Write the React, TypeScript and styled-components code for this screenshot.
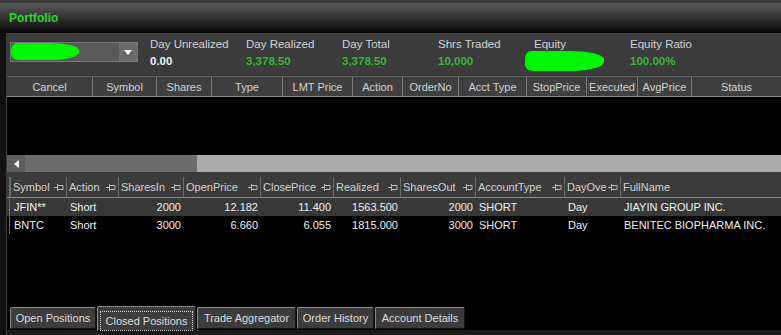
import React from 'react';
import styled, { createGlobalStyle } from 'styled-components';

const Global = createGlobalStyle`
  html, body { margin: 0; padding: 0; background: #000; }
  body { font-family: "Liberation Sans", Arial, sans-serif; overflow: hidden; }
  * { box-sizing: border-box; }
`;

const Window = styled.div`
  width: 781px;
  height: 335px;
  display: flex;
  flex-direction: column;
  background: #000;
  overflow: hidden;
`;

const TopStrip = styled.div`
  height: 3px;
  flex: none;
  background: #3b3b3b;
`;

const TitleBar = styled.div`
  height: 30px;
  flex: none;
  display: flex;
  align-items: center;
  padding-left: 9px;
  background: linear-gradient(#5a5a5a, #2c2c2c 55%, #050505);
  color: #22dd22;
  font-weight: bold;
  font-size: 12px;
`;

const Body = styled.div`
  flex: 1;
  display: flex;
  min-height: 0;
`;

const Rail = styled.div`
  width: 7px;
  flex: none;
  background: #121212;
  border-right: 1px solid #3a3a3a;
`;

const Main = styled.div`
  flex: 1;
  display: flex;
  flex-direction: column;
  min-width: 0;
`;

/* ---------- Info panel ---------- */
const InfoPanel = styled.div`
  height: 43px;
  flex: none;
  background: #3b3b3b;
  display: flex;
  align-items: flex-start;
  padding: 4px 0 0 3px;
`;

const Dropdown = styled.div`
  width: 128px;
  height: 20px;
  margin-top: 5px;
  border: 1px solid #767676;
  background: #585858;
  display: flex;
  align-items: stretch;
`;

const Blob = styled.span<{ $w: number; $h: number }>`
  display: block;
  width: ${p => p.$w}px;
  height: ${p => p.$h}px;
  background: #00f500;
  border-radius: 6px 45% 40% 8px / 8px 40% 45% 6px;
`;

const DropSpacer = styled.div`
  flex: 1;
`;

const DropButton = styled.div`
  width: 18px;
  background: #6a6a6a;
  display: flex;
  align-items: center;
  justify-content: center;
`;

const Stats = styled.div`
  display: flex;
  margin-left: 12px;
`;

const Stat = styled.div`
  width: 96px;
  display: flex;
  flex-direction: column;
  font-size: 11.5px;
  line-height: 15px;
`;

const StatLabel = styled.div`
  color: #d2d2d2;
`;

const StatValue = styled.div<{ $green?: boolean }>`
  color: ${p => (p.$green ? '#35b935' : '#f2f2f2')};
  font-weight: bold;
  margin-top: 2px;
`;

const BlobValue = styled.div`
  margin: -1px 0 0 -9px;
`;

/* ---------- Orders grid ---------- */
const OrdersHeader = styled.div`
  height: 21px;
  flex: none;
  display: flex;
  background: #3f3f3f;
  border-top: 1px solid #5c5c5c;
  border-bottom: 1px solid #8c8c8c;
`;

const HeadCell = styled.div<{ $w?: number }>`
  ${p => (p.$w ? `width: ${p.$w}px; flex: none;` : 'flex: 1;')}
  border-right: 1px solid #7a7a7a;
  color: #d2d2d2;
  font-size: 11px;
  display: flex;
  align-items: center;
  justify-content: center;
  white-space: nowrap;
  overflow: hidden;
  &:last-child { border-right: none; }
`;

const OrdersBody = styled.div`
  height: 58px;
  flex: none;
  background: #000;
`;

const ScrollBar = styled.div`
  height: 17px;
  flex: none;
  display: flex;
  background: #ababab;
`;

const ScrollArrow = styled.div`
  width: 18px;
  background: #5e5e5e;
  display: flex;
  align-items: center;
  justify-content: center;
`;

const ScrollThumb = styled.div`
  width: 172px;
  background: #6b6b6b;
`;

/* ---------- Closed positions grid ---------- */
const ClosedGrid = styled.div`
  flex: 1;
  display: flex;
  flex-direction: column;
  background: #000;
`;

const ClosedHeader = styled.div`
  height: 26px;
  flex: none;
  display: flex;
  padding-top: 5px;
  background: #3b3b3b;
  border-bottom: 1px solid #8c8c8c;
`;

const Row = styled.div<{ $alt?: boolean }>`
  height: 18px;
  flex: none;
  display: flex;
  background: ${p => (p.$alt ? '#000' : '#383838')};
`;

const Selector = styled.div`
  width: 3px;
  flex: none;
  border-right: 1px solid #6a6a6a;
`;

const ColHead = styled.div<{ $w: number }>`
  width: ${p => p.$w}px;
  flex: none;
  border-left: 1px solid #6c6c6c;
  padding: 0 2px;
  display: flex;
  align-items: center;
  justify-content: space-between;
  color: #d2d2d2;
  font-size: 11px;
  white-space: nowrap;
  overflow: hidden;
  &:first-of-type { border-left: none; }
`;

const Cell = styled.div<{ $w: number; $right?: boolean }>`
  width: ${p => p.$w}px;
  flex: none;
  display: flex;
  align-items: center;
  justify-content: ${p => (p.$right ? 'flex-end' : 'flex-start')};
  padding: ${p => (p.$right ? '0 2px 0 0' : '0 0 0 4px')};
  color: #f0f0f0;
  font-size: 11px;
  white-space: nowrap;
  overflow: hidden;
`;

const Filler = styled.div`
  flex: 1;
`;

/* ---------- Tabs ---------- */
const TabStrip = styled.div`
  height: 30px;
  flex: none;
  display: flex;
  align-items: flex-start;
  gap: 1px;
  padding: 2px 0 0 3px;
  background: #000;
  border-bottom: 5px solid #1a1a1a;
`;

const Tab = styled.div<{ $w: number; $active?: boolean }>`
  width: ${p => p.$w}px;
  height: ${p => (p.$active ? 25 : 22)}px;
  margin-top: ${p => (p.$active ? -1 : 0)}px;
  background: #3c3c3c;
  border-top: 1px solid #8a8a8a;
  border-left: 1px solid #8a8a8a;
  border-right: 1px solid #161616;
  border-bottom: 1px solid #161616;
  border-radius: 2px 2px 0 0;
  color: #dcdcdc;
  font-size: 11px;
  display: flex;
  align-items: center;
  justify-content: center;
  padding-top: ${p => (p.$active ? 4 : 0)}px;
  white-space: nowrap;
`;

const Focus = styled.span`
  outline: 1px dotted #d8d8d8;
  outline-offset: 3px;
  padding: 0 2px;
`;

const Pin = () => (
  <svg width="10" height="9" viewBox="0 0 10 9">
    <path d="M0 4.5H3M3.5 1V8M3.5 2.5H9V6.5H3.5" stroke="#bdbdbd" strokeWidth="1" fill="none" />
  </svg>
);

const orderCols: [string, number | undefined][] = [
  ['Cancel', 86],
  ['Symbol', 64],
  ['Shares', 55],
  ['Type', 71],
  ['LMT Price', 70],
  ['Action', 50],
  ['OrderNo', 56],
  ['Acct Type', 68],
  ['StopPrice', 60],
  ['Executed', 51],
  ['AvgPrice', 54],
  ['Status', undefined],
];

const closedCols: { name: string; w: number; right?: boolean }[] = [
  { name: 'Symbol', w: 56 },
  { name: 'Action', w: 52 },
  { name: 'SharesIn', w: 65, right: true },
  { name: 'OpenPrice', w: 77, right: true },
  { name: 'ClosePrice', w: 73, right: true },
  { name: 'Realized', w: 67, right: true },
  { name: 'SharesOut', w: 75, right: true },
  { name: 'AccountType', w: 89 },
  { name: 'DayOve', w: 56 },
  { name: 'FullName', w: 161 },
];

const rows = [
  ['JFIN**', 'Short', '2000', '12.182', '11.400', '1563.500', '2000', 'SHORT', 'Day', 'JIAYIN GROUP INC.'],
  ['BNTC', 'Short', '3000', '6.660', '6.055', '1815.000', '3000', 'SHORT', 'Day', 'BENITEC BIOPHARMA INC.'],
];

const tabs: [string, number][] = [
  ['Open Positions', 86],
  ['Closed Positions', 99],
  ['Trade Aggregator', 99],
  ['Order History', 77],
  ['Account Details', 90],
];

export default function App() {
  return (
    <Window>
      <Global />
      <TopStrip />
      <TitleBar>Portfolio</TitleBar>
      <Body>
        <Rail />
        <Main>
          <InfoPanel>
            <Dropdown>
              <Blob $w={68} $h={17} />
              <DropSpacer />
              <DropButton>
                <svg width="8" height="5" viewBox="0 0 8 5">
                  <path d="M0 0H8L4 5Z" fill="#ffffff" />
                </svg>
              </DropButton>
            </Dropdown>
            <Stats>
              <Stat>
                <StatLabel>Day Unrealized</StatLabel>
                <StatValue>0.00</StatValue>
              </Stat>
              <Stat>
                <StatLabel>Day Realized</StatLabel>
                <StatValue $green>3,378.50</StatValue>
              </Stat>
              <Stat>
                <StatLabel>Day Total</StatLabel>
                <StatValue $green>3,378.50</StatValue>
              </Stat>
              <Stat>
                <StatLabel>Shrs Traded</StatLabel>
                <StatValue $green>10,000</StatValue>
              </Stat>
              <Stat>
                <StatLabel>Equity</StatLabel>
                <BlobValue>
                  <Blob $w={79} $h={20} />
                </BlobValue>
              </Stat>
              <Stat>
                <StatLabel>Equity Ratio</StatLabel>
                <StatValue $green>100.00%</StatValue>
              </Stat>
            </Stats>
          </InfoPanel>

          <OrdersHeader>
            {orderCols.map(([n, w]) => (
              <HeadCell key={n} $w={w}>{n}</HeadCell>
            ))}
          </OrdersHeader>
          <OrdersBody />
          <ScrollBar>
            <ScrollArrow>
              <svg width="5" height="8" viewBox="0 0 5 8">
                <path d="M5 0V8L0 4Z" fill="#ffffff" />
              </svg>
            </ScrollArrow>
            <ScrollThumb />
          </ScrollBar>

          <ClosedGrid>
            <ClosedHeader>
              <Selector />
              {closedCols.map(c => (
                <ColHead key={c.name} $w={c.w}>
                  <span>{c.name}</span>
                  {c.name !== 'FullName' && <Pin />}
                </ColHead>
              ))}
            </ClosedHeader>
            {rows.map((r, i) => (
              <Row key={r[0]} $alt={i === 1}>
                <Selector />
                {closedCols.map((c, j) => (
                  <Cell key={c.name} $w={c.w} $right={c.right}>{r[j]}</Cell>
                ))}
              </Row>
            ))}
            <Filler />
          </ClosedGrid>

          <TabStrip>
            {tabs.map(([n, w]) => (
              <Tab key={n} $w={w} $active={n === 'Closed Positions'}>
                {n === 'Closed Positions' ? <Focus>{n}</Focus> : n}
              </Tab>
            ))}
          </TabStrip>
        </Main>
      </Body>
    </Window>
  );
}
